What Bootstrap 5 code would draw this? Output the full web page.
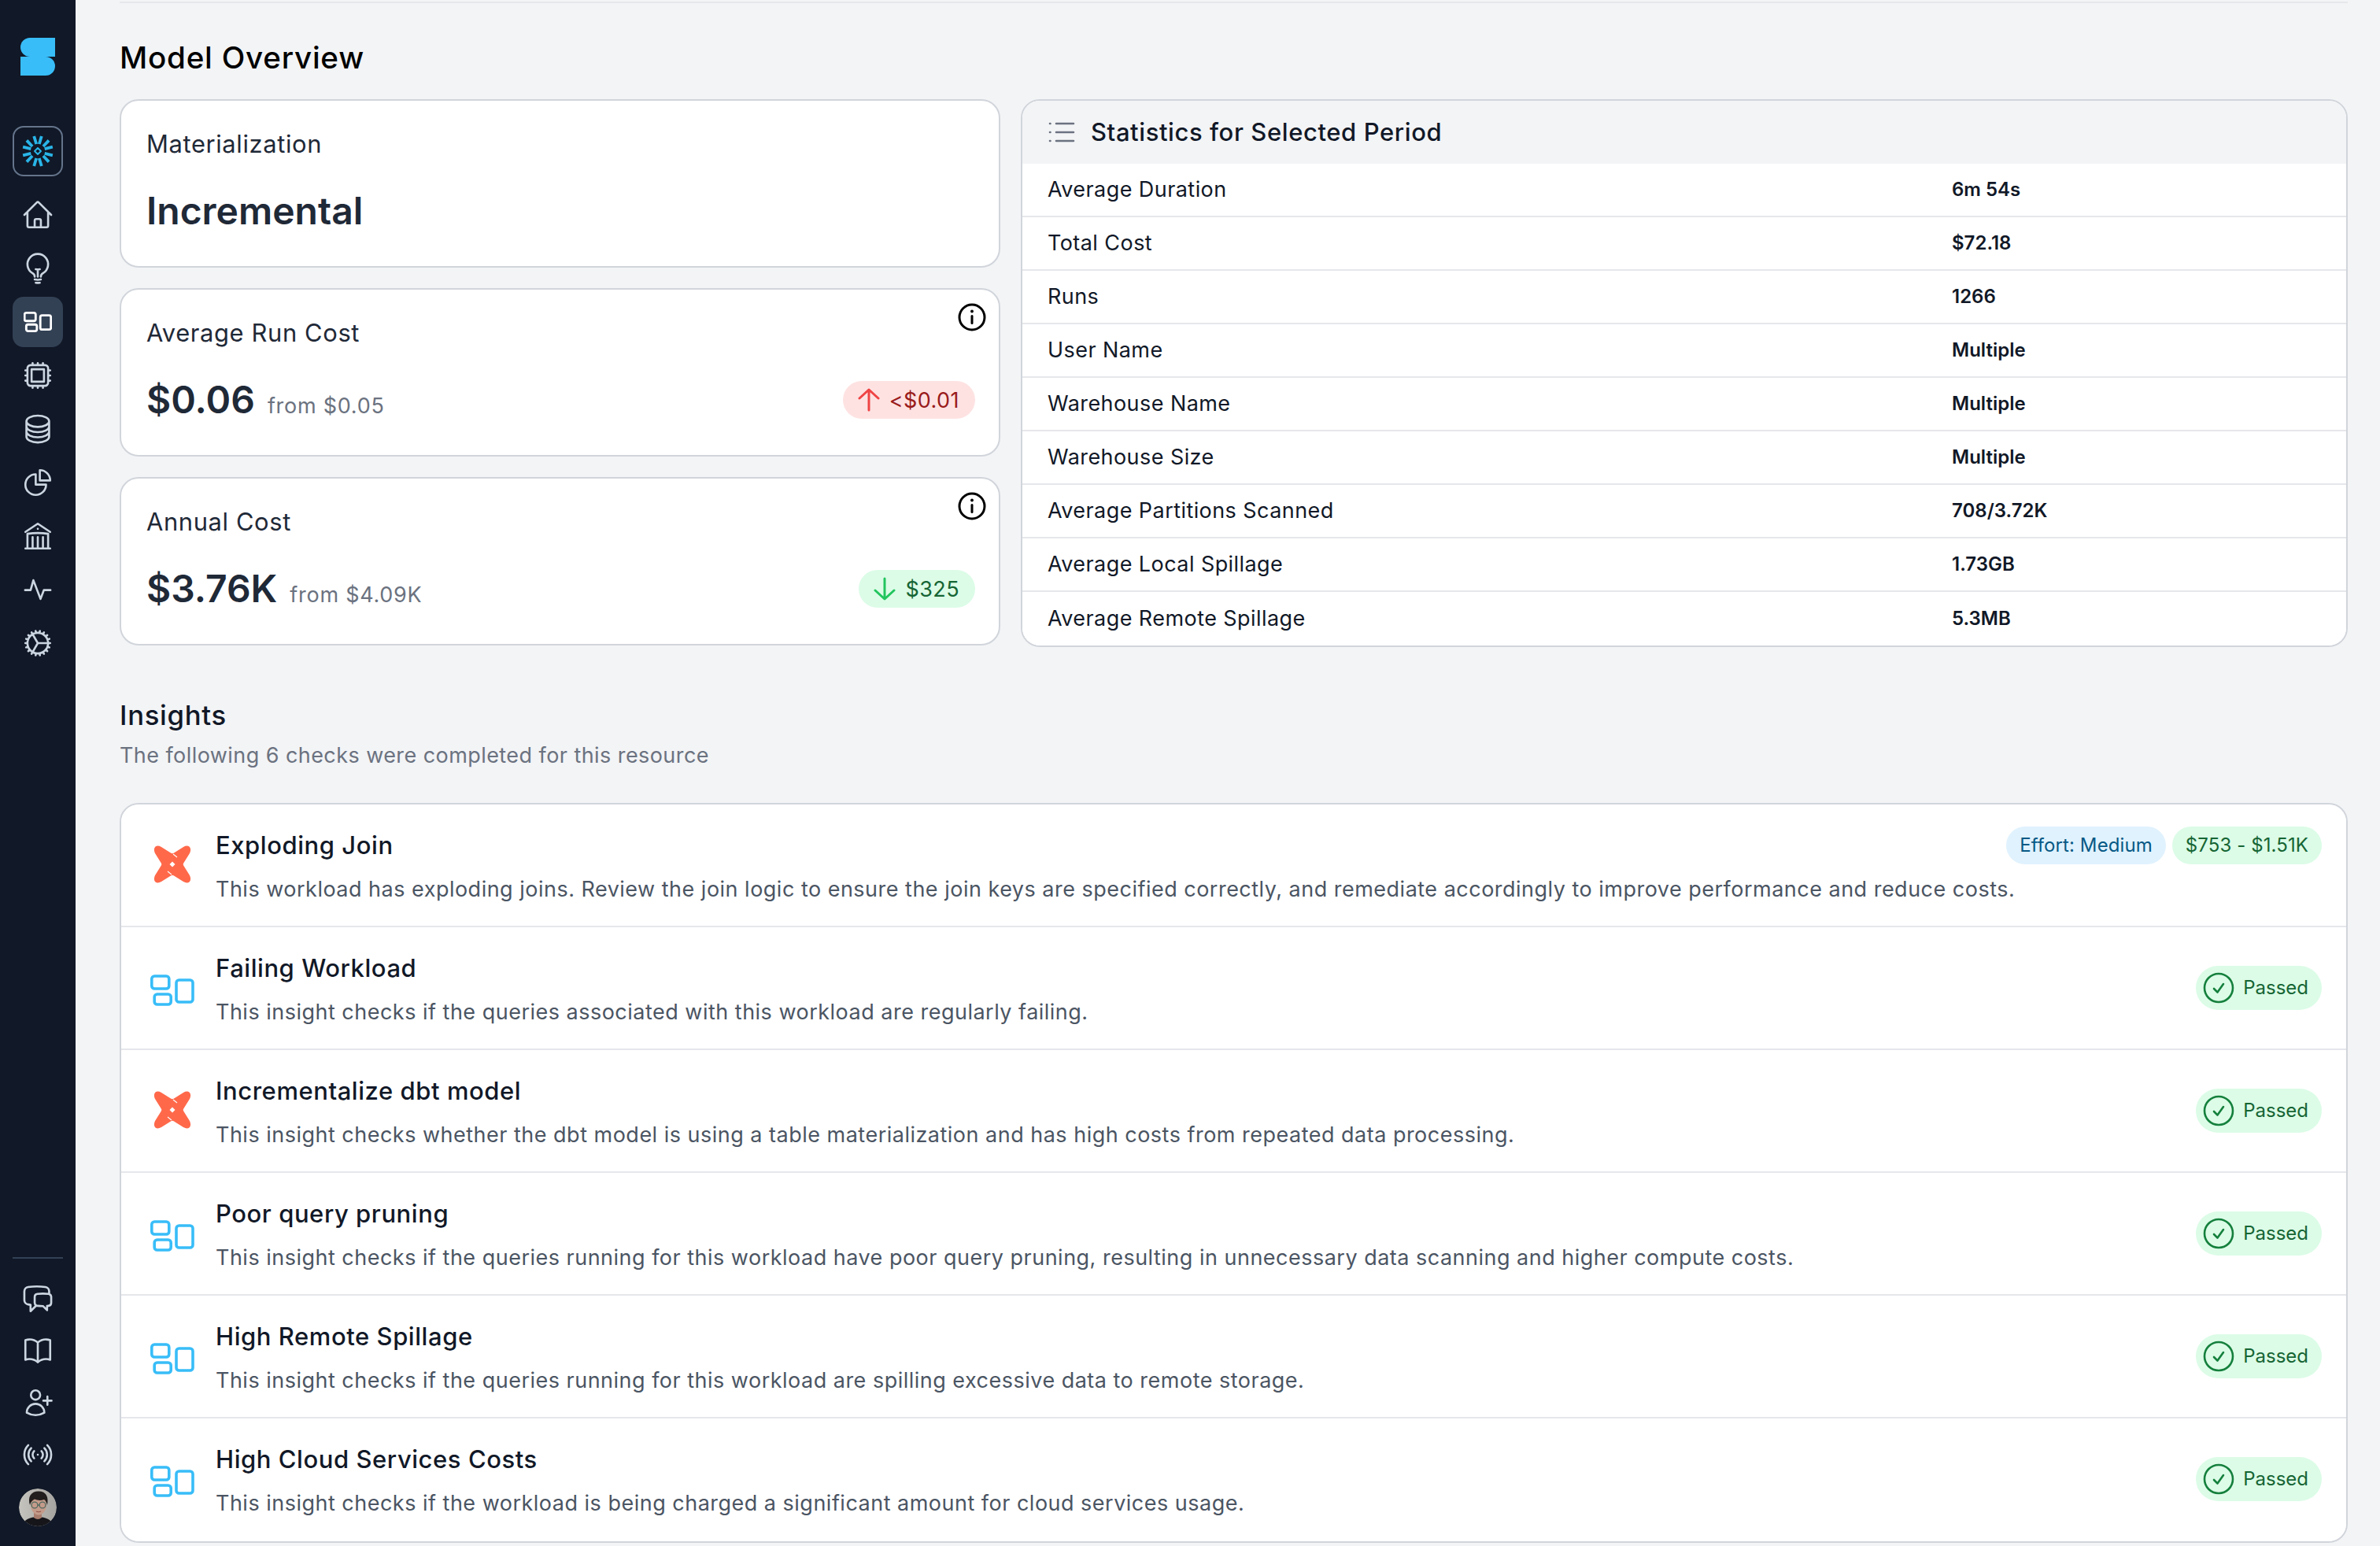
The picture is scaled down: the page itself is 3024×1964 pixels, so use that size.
<!DOCTYPE html>
<html lang="en">
<head>
<meta charset="utf-8">
<title>Model Overview</title>
<link href="https://cdn.jsdelivr.net/npm/bootstrap@5.3.0/dist/css/bootstrap.min.css" rel="stylesheet">
<style>
html,body{height:100%;overflow:hidden}
body{background:#f3f4f6;font-family:Inter,"Liberation Sans",sans-serif;color:#111827;letter-spacing:.027em}
.side-rail{width:96px;height:1964px;background:#111827;padding:48px 16px 25px}
.side-logo{width:44px;height:48px;margin:0 auto 64px;display:block}
.side-btn{width:64px;height:64px;border-radius:14px;color:#cbd5e1}
.side-btn svg{width:42px;height:42px}
.side-snow{border:2px solid #64748b;margin-bottom:17px}
.side-on{background:#334155;color:#fff}
.side-on svg{width:36px;height:36px}
.side-stack{gap:4px}
.side-tools{gap:2px}
.side-rule{height:2px;background:#334155;margin-bottom:19px}
.side-ava{width:48px;height:48px;border-radius:50%;margin:11px auto 0;display:block}
.main-pane{padding:2px 41px 0 56px;min-width:0}
.top-rule{height:2px;background:#e5e7eb}
.sec-title{font-size:38.6px;font-weight:500;line-height:50px;color:#000;margin:44px 0 28px;letter-spacing:.02em}
.sec-title.is-second{margin:61px 0 7px;color:#111827;font-size:34.7px;letter-spacing:.02em}
.sec-sub{font-size:27px;line-height:40px;color:#6b7280;margin-bottom:40px}
.ov-wrap{gap:26px}
.ov-left{width:1119px;gap:26px}
.ov-right{min-width:0}
.pane-card{--bs-card-border-color:#d1d5db;--bs-card-border-width:2px;--bs-card-border-radius:24px;--bs-card-inner-border-radius:22px;overflow:hidden}
.kpi-card{height:214px;padding:32px 30px 0 32px}
.kpi-label{font-size:30.9px;line-height:46px;color:#1f2937;letter-spacing:.02em}
.kpi-row{margin-top:27px;height:70px}
.kpi-num{font-size:48px;font-weight:600;line-height:70px;color:#1f2937;letter-spacing:0}
.kpi-from{font-size:27px;color:#6b7280;margin-left:16px;letter-spacing:.027em}
.kpi-info{position:absolute;right:16px;top:17px;width:36px;height:36px;color:#000}
.tag-pill{display:inline-flex;align-items:center;height:48px;border-radius:24px;padding:0 20px 0 19px;font-size:27px;line-height:1;white-space:nowrap;flex-shrink:0}
.tag-pill svg{width:28px;height:30px;margin-right:12px}
.tag-red{background:#fee2e2;color:#991b1b}
.tag-green{background:#dcfce7;color:#166534}
.tag-small{font-size:24px;padding:0 17px;letter-spacing:.004em}
.tag-blue{background:#e0f2fe;color:#075985}
.tag-pass{height:56px;border-radius:28px;padding:0 17px 0 9px;font-size:24px;letter-spacing:0}
.tag-pass svg{width:40px;height:40px;margin-right:11px}
.stat-head{height:80px;background:#f3f4f6;padding:0 33px;font-size:31px;font-weight:500;color:#111827;letter-spacing:.019em}
.stat-head svg{width:34px;height:28px;margin:0 20px 0 0;color:#6b7280}
.stat-list{--bs-list-group-border-color:#e5e7eb;--bs-list-group-border-width:2px;--bs-list-group-item-padding-x:32px;--bs-list-group-item-padding-y:0;background:#fff;border-top:0!important;border-bottom:0!important}
.stat-row{height:68px;font-size:27px;color:#111827}
.stat-name{width:1149px}
.stat-val{font-size:24px;font-weight:600;color:#111827;letter-spacing:0}
.ins-list{--bs-list-group-border-color:#e5e7eb;--bs-list-group-border-width:2px;--bs-list-group-item-padding-x:33px;--bs-list-group-item-padding-y:0;border-top:0!important;border-bottom:0!important}
.ins-row{height:156px;padding-top:29px!important}
.ins-ico{width:56px;height:48px;margin-top:23px;margin-left:4px}
.ins-ico-blue{width:56px;height:40px;margin:31px 0 0 4px;color:#38bdf8}
.ins-body{margin-left:27px;min-width:0}
.ins-name{font-size:31px;font-weight:500;line-height:46px;color:#111827;letter-spacing:.018em}
.ins-desc{font-size:27px;line-height:46px;color:#4b5563;margin-top:10px;white-space:nowrap;letter-spacing:.0181em}
.ins-tags{gap:8px;margin:-1px -2px 0 auto}
.ins-pass{margin:20px -2px 0 auto}
</style>
</head>
<body class="d-flex m-0">
<svg width="0" height="0" class="position-absolute">
<defs>
<g id="ic-stack"><rect x="1.8" y="2" width="22" height="16" rx="3.5"/><rect x="5.2" y="25" width="21" height="13" rx="3.5"/><rect x="33" y="7" width="21" height="28" rx="3.5"/></g>
<g id="ic-dbt"><path fill="#ff694a" d="M2.500 1.500Q5.500-.5 10 2L22 9.500Q24 11 26 9.500L38 2Q42.500-.5 45.500 1.500 48.500 4.500 46 10L38.500 22Q37 24 38.500 26L46 38Q48.500 43.500 45.500 46.500 42.500 48.500 38 46L26 38.500Q24 37 22 38.500L10 46Q5.500 48.500 2.500 46.500-.5 43.500 2 38L9.500 26Q11 24 9.500 22L2 10Q-.5 4.500 2.500 1.500Z"/><path d="M24 20.500 27.500 24 24 27.500 20.500 24Z" fill="#fff"/><path d="M25 11 30 15M23 37 18 33" stroke="#fff" stroke-width="1.100" fill="none"/></g>
</defs>
</svg>

<aside class="side-rail d-flex flex-column flex-shrink-0">
  <svg class="side-logo" viewBox="0 0 44 48"><path fill="#38bdf8" d="M12 0H44V24H12A12 12 0 0 1 12 0Z"/><path fill="#38bdf8" d="M0 24H32A12 12 0 0 1 32 48H0Z"/></svg>
  <div class="side-btn side-snow d-flex align-items-center justify-content-center">
    <svg viewBox="-21 -21 42 42" fill="none" stroke="#29b5e8" stroke-width="3.800" stroke-linejoin="round">
      <g id="sn-arm"><path d="M-4.800-19-1.800-9M4.800-19 1.800-9"/></g>
      <use href="#sn-arm" transform="rotate(60)"/><use href="#sn-arm" transform="rotate(120)"/><use href="#sn-arm" transform="rotate(180)"/><use href="#sn-arm" transform="rotate(240)"/><use href="#sn-arm" transform="rotate(300)"/>
      <path d="M-4 0 0-4 4 0 0 4Z" stroke-width="1.900"/>
    </svg>
  </div>
  <nav class="side-stack d-flex flex-column">
    <a class="side-btn d-flex align-items-center justify-content-center"><svg viewBox="0 0 24 24" fill="none" stroke="currentColor" stroke-width="1.500" stroke-linecap="round" stroke-linejoin="round"><path d="M2.25 12l8.954-8.955c.44-.439 1.152-.439 1.591 0L21.75 12M4.5 9.75v10.125c0 .621.504 1.125 1.125 1.125H9.75v-4.875c0-.621.504-1.125 1.125-1.125h2.25c.621 0 1.125.504 1.125 1.125V21h4.125c.621 0 1.125-.504 1.125-1.125V9.75M8.25 21h8.25"/></svg></a>
    <a class="side-btn d-flex align-items-center justify-content-center"><svg viewBox="0 0 24 24" fill="none" stroke="currentColor" stroke-width="1.500" stroke-linecap="round" stroke-linejoin="round"><path d="M12 18v-5.250m0 0a6.010 6.010 0 001.500-.189m-1.500.189a6.010 6.010 0 01-1.500-.189m3.750 7.478a12.060 12.060 0 01-4.500 0m3.750 2.383a14.406 14.406 0 01-3 0M14.250 18v-.192c0-.983.658-1.823 1.508-2.316a7.500 7.500 0 10-7.517 0c.85.493 1.509 1.333 1.509 2.316V18"/></svg></a>
    <a class="side-btn side-on d-flex align-items-center justify-content-center"><svg viewBox="0 0 56 40" fill="none" stroke="currentColor" stroke-width="4.400"><use href="#ic-stack"/></svg></a>
    <a class="side-btn d-flex align-items-center justify-content-center"><svg viewBox="0 0 24 24" fill="none" stroke="currentColor" stroke-width="1.500" stroke-linecap="round" stroke-linejoin="round"><path d="M8.250 3v1.500M4.500 8.250H3m18 0h-1.500M4.500 12H3m18 0h-1.500m-15 3.750H3m18 0h-1.500M8.250 19.500V21M12 3v1.500m0 15V21m3.750-18v1.500m0 15V21m-9-1.500h10.500a2.250 2.250 0 002.250-2.250V6.750a2.250 2.250 0 00-2.250-2.250H6.750A2.250 2.250 0 004.500 6.750v10.500a2.250 2.250 0 002.250 2.250zm.75-12h9v9h-9v-9z"/></svg></a>
    <a class="side-btn d-flex align-items-center justify-content-center"><svg viewBox="0 0 24 24" fill="none" stroke="currentColor" stroke-width="1.500" stroke-linecap="round" stroke-linejoin="round"><path d="M20.250 6.375c0 2.278-3.694 4.125-8.250 4.125S3.750 8.653 3.750 6.375m16.500 0c0-2.278-3.694-4.125-8.250-4.125S3.750 4.097 3.750 6.375m16.500 0v11.250c0 2.278-3.694 4.125-8.250 4.125s-8.250-1.847-8.250-4.125V6.375m16.500 0v3.750m-16.500-3.750v3.750m16.500 0v3.750C20.250 16.153 16.556 18 12 18s-8.250-1.847-8.250-4.125v-3.750m16.500 0c0 2.278-3.694 4.125-8.250 4.125s-8.250-1.847-8.250-4.125"/></svg></a>
    <a class="side-btn d-flex align-items-center justify-content-center"><svg viewBox="0 0 24 24" fill="none" stroke="currentColor" stroke-width="1.500" stroke-linecap="round" stroke-linejoin="round"><path d="M10.500 6a7.500 7.500 0 107.500 7.500h-7.500V6z"/><path d="M13.500 10.500H21A7.500 7.500 0 0013.500 3v7.500z"/></svg></a>
    <a class="side-btn d-flex align-items-center justify-content-center"><svg viewBox="0 0 24 24" fill="none" stroke="currentColor" stroke-width="1.500" stroke-linecap="round" stroke-linejoin="round"><path d="M12 21v-8.250M15.750 21v-8.250M8.250 21v-8.250M3 9l9-6 9 6m-1.500 12V10.332A48.360 48.360 0 0012 9.750c-2.551 0-5.056.2-7.500.582V21M3 21h18M12 6.750h.008v.008H12V6.750z"/></svg></a>
    <a class="side-btn d-flex align-items-center justify-content-center"><svg viewBox="-3 -3 30 30" fill="none" stroke="currentColor" stroke-width="1.900" stroke-linecap="round" stroke-linejoin="round"><path d="M.5 12.500h5L8 3.500l6.500 17 3-8h6"/></svg></a>
    <a class="side-btn d-flex align-items-center justify-content-center"><svg viewBox="0 0 24 24" fill="none" stroke="currentColor" stroke-width="1.500" stroke-linecap="round" stroke-linejoin="round"><path d="M4.500 12a7.500 7.500 0 0015 0m-15 0a7.500 7.500 0 1115 0m-15 0H3m16.500 0H21m-1.500 0H12m-8.457 3.077l1.410-.513m14.095-5.130l1.410-.513M5.106 17.785l1.150-.964m11.490-9.642l1.149-.964M7.501 19.795l.75-1.300m7.500-12.990l.75-1.300m-6.063 16.658l.26-1.477m2.605-14.772l.26-1.477m0 17.726l-.26-1.477M10.698 4.614l-.26-1.477M16.500 19.794l-.75-1.299M7.500 4.205L12 12m6.894 5.785l-1.149-.964M6.256 7.178l-1.150-.964m15.352 8.864l-1.410-.513M4.954 9.435l-1.410-.514M12.002 12l-3.750 6.495"/></svg></a>
  </nav>
  <div class="mt-auto">
    <div class="side-rule"></div>
    <div class="side-tools d-flex flex-column align-items-center">
      <a class="side-btn d-flex align-items-center justify-content-center"><svg viewBox="0 0 24 24" fill="none" stroke="currentColor" stroke-width="1.500" stroke-linecap="round" stroke-linejoin="round"><path d="M20.250 8.511c.884.284 1.500 1.128 1.500 2.097v4.286c0 1.136-.847 2.100-1.980 2.193-.34.027-.68.052-1.020.072v3.091l-3-3c-1.354 0-2.694-.055-4.020-.163a2.115 2.115 0 01-.825-.242m9.345-8.334a2.126 2.126 0 00-.476-.095 48.640 48.640 0 00-8.048 0c-1.131.094-1.976 1.057-1.976 2.192v4.286c0 .837.46 1.580 1.155 1.951m9.345-8.334V6.637c0-1.621-1.152-3.026-2.760-3.235A48.455 48.455 0 0011.250 3c-2.115 0-4.198.137-6.240.402-1.608.209-2.760 1.614-2.760 3.235v6.226c0 1.621 1.152 3.026 2.760 3.235.577.075 1.157.14 1.740.194V21l4.155-4.155"/></svg></a>
      <a class="side-btn d-flex align-items-center justify-content-center"><svg viewBox="0 0 24 24" fill="none" stroke="currentColor" stroke-width="1.500" stroke-linecap="round" stroke-linejoin="round"><path d="M12 6.042A8.967 8.967 0 006 3.750c-1.052 0-2.062.18-3 .512v14.250A8.987 8.987 0 016 18c2.305 0 4.408.867 6 2.292m0-14.250a8.966 8.966 0 016-2.292c1.052 0 2.062.18 3 .512v14.250A8.987 8.987 0 0018 18a8.967 8.967 0 00-6 2.292m0-14.250v14.250"/></svg></a>
      <a class="side-btn d-flex align-items-center justify-content-center"><svg viewBox="0 0 24 24" fill="none" stroke="currentColor" stroke-width="1.500" stroke-linecap="round" stroke-linejoin="round"><path d="M19 7.500v3m0 0v3m0-3h3m-3 0h-3m-2.250-4.125a3.375 3.375 0 11-6.750 0 3.375 3.375 0 016.750 0zM4 19.235v-.11a6.375 6.375 0 0112.750 0v.109A12.318 12.318 0 0110.374 21c-2.331 0-4.512-.645-6.374-1.766z"/></svg></a>
      <a class="side-btn d-flex align-items-center justify-content-center"><svg viewBox="0 0 24 24" fill="none" stroke="currentColor" stroke-width="1.500" stroke-linecap="round" stroke-linejoin="round"><path d="M9.348 14.651a3.750 3.750 0 010-5.303m5.304 0a3.750 3.750 0 010 5.303m-7.425 2.122a6.750 6.750 0 010-9.546m9.546 0a6.750 6.750 0 010 9.546M5.106 18.894c-3.808-3.808-3.808-9.980 0-13.789m13.788 0c3.808 3.808 3.808 9.981 0 13.790M12 12h.008v.007H12V12z"/></svg></a>
    </div>
    <svg class="side-ava" viewBox="0 0 48 48">
      <defs><clipPath id="ava-c"><circle cx="24" cy="24" r="24"/></clipPath><linearGradient id="ava-bg" x1="0" x2="1"><stop offset="0" stop-color="#c4c3bd"/><stop offset="1" stop-color="#a6a4a0"/></linearGradient></defs>
      <g clip-path="url(#ava-c)">
        <rect width="48" height="48" fill="url(#ava-bg)"/>
        <path d="M4 48c1-8 10-12 20-12s19 4 20 12z" fill="#15151a"/>
        <path d="M19 27h10v10q-5 4-10 0z" fill="#a87c6c"/>
        <ellipse cx="25" cy="21" rx="10" ry="12.500" fill="#c49b8a"/>
        <path d="M14 21C11 11 15 3.500 25 3.500S38 11 36 21c-1-3-2-6-4-7-4 1.500-9 1-12-.5-3 1.500-5 4-6 7.500z" fill="#221e1d"/>
        <g fill="none" stroke="#4f6a5f" stroke-width="1.300"><circle cx="20" cy="21" r="3.900"/><circle cx="30" cy="21" r="3.900"/><path d="M23.900 21h2.200"/></g>
        <path d="M22 29c2 1 4 1 6 0" stroke="#8f5248" stroke-width="1.200" fill="none"/>
      </g>
    </svg>
  </div>
</aside>

<main class="main-pane flex-grow-1">
  <div class="top-rule"></div>
  <h2 class="sec-title">Model Overview</h2>
  <div class="d-flex ov-wrap">
    <div class="ov-left d-flex flex-column flex-shrink-0">
      <div class="card pane-card kpi-card">
        <div class="kpi-label">Materialization</div>
        <div class="kpi-row d-flex align-items-center"><span class="kpi-num">Incremental</span></div>
      </div>
      <div class="card pane-card kpi-card position-relative">
        <svg class="kpi-info" viewBox="0 0 36 36" fill="none" stroke="currentColor" stroke-width="3"><circle cx="18" cy="18" r="16"/><path d="M18 16.500v9" stroke-linecap="round"/><circle cx="18" cy="10.500" r="1.900" fill="currentColor" stroke="none"/></svg>
        <div class="kpi-label">Average Run Cost</div>
        <div class="kpi-row d-flex align-items-center justify-content-between">
          <div class="d-flex align-items-baseline"><span class="kpi-num">$0.06</span><span class="kpi-from">from $0.05</span></div>
          <span class="tag-pill tag-red"><svg viewBox="0 0 28 30" fill="none" stroke="#ef4444" stroke-width="3" stroke-linecap="round" stroke-linejoin="round"><path d="M14 28V3M2 13 14 2l12 11"/></svg>&lt;$0.01</span>
        </div>
      </div>
      <div class="card pane-card kpi-card position-relative">
        <svg class="kpi-info" viewBox="0 0 36 36" fill="none" stroke="currentColor" stroke-width="3"><circle cx="18" cy="18" r="16"/><path d="M18 16.500v9" stroke-linecap="round"/><circle cx="18" cy="10.500" r="1.900" fill="currentColor" stroke="none"/></svg>
        <div class="kpi-label">Annual Cost</div>
        <div class="kpi-row d-flex align-items-center justify-content-between">
          <div class="d-flex align-items-baseline"><span class="kpi-num">$3.76K</span><span class="kpi-from">from $4.09K</span></div>
          <span class="tag-pill tag-green"><svg viewBox="0 0 28 30" fill="none" stroke="#22c55e" stroke-width="3" stroke-linecap="round" stroke-linejoin="round"><path d="M14 2v25M2 17l12 11 12-11"/></svg>$325</span>
        </div>
      </div>
    </div>
    <div class="ov-right flex-grow-1">
      <div class="card pane-card h-100">
        <div class="stat-head d-flex align-items-center">
          <svg viewBox="0 0 34 28" fill="none" stroke="currentColor" stroke-width="2.600" stroke-linecap="round"><path d="M10 3h22M10 14h22M10 25h22M2 3h.5M2 14h.5M2 25h.5"/></svg>
          <span>Statistics for Selected Period</span>
        </div>
        <div class="list-group list-group-flush stat-list">
          <div class="list-group-item stat-row d-flex align-items-center"><span class="stat-name">Average Duration</span><span class="stat-val">6m 54s</span></div>
          <div class="list-group-item stat-row d-flex align-items-center"><span class="stat-name">Total Cost</span><span class="stat-val">$72.18</span></div>
          <div class="list-group-item stat-row d-flex align-items-center"><span class="stat-name">Runs</span><span class="stat-val">1266</span></div>
          <div class="list-group-item stat-row d-flex align-items-center"><span class="stat-name">User Name</span><span class="stat-val">Multiple</span></div>
          <div class="list-group-item stat-row d-flex align-items-center"><span class="stat-name">Warehouse Name</span><span class="stat-val">Multiple</span></div>
          <div class="list-group-item stat-row d-flex align-items-center"><span class="stat-name">Warehouse Size</span><span class="stat-val">Multiple</span></div>
          <div class="list-group-item stat-row d-flex align-items-center"><span class="stat-name">Average Partitions Scanned</span><span class="stat-val">708/3.72K</span></div>
          <div class="list-group-item stat-row d-flex align-items-center"><span class="stat-name">Average Local Spillage</span><span class="stat-val">1.73GB</span></div>
          <div class="list-group-item stat-row d-flex align-items-center"><span class="stat-name">Average Remote Spillage</span><span class="stat-val">5.3MB</span></div>
        </div>
      </div>
    </div>
  </div>

  <h2 class="sec-title is-second">Insights</h2>
  <p class="sec-sub">The following 6 checks were completed for this resource</p>

  <div class="card pane-card">
    <div class="list-group list-group-flush ins-list">
      <div class="list-group-item ins-row d-flex">
        <svg class="ins-ico flex-shrink-0" viewBox="-4 0 56 48"><use href="#ic-dbt"/></svg>
        <div class="ins-body"><div class="ins-name">Exploding Join</div><div class="ins-desc">This workload has exploding joins. Review the join logic to ensure the join keys are specified correctly, and remediate accordingly to improve performance and reduce costs.</div></div>
        <div class="ins-tags d-flex align-items-start"><span class="tag-pill tag-small tag-blue">Effort: Medium</span><span class="tag-pill tag-small tag-green">$753 - $1.51K</span></div>
      </div>
      <div class="list-group-item ins-row d-flex">
        <svg class="ins-ico-blue flex-shrink-0" viewBox="0 0 56 40" fill="none" stroke="currentColor" stroke-width="3.600"><use href="#ic-stack"/></svg>
        <div class="ins-body"><div class="ins-name">Failing Workload</div><div class="ins-desc">This insight checks if the queries associated with this workload are regularly failing.</div></div>
        <div class="ins-pass"><span class="tag-pill tag-green tag-pass"><svg viewBox="0 0 40 40" fill="none" stroke="#15803d" stroke-width="2.600" stroke-linecap="round" stroke-linejoin="round"><circle cx="20" cy="20" r="18"/><path d="M14 21l4.500 4.500L26 15"/></svg>Passed</span></div>
      </div>
      <div class="list-group-item ins-row d-flex">
        <svg class="ins-ico flex-shrink-0" viewBox="-4 0 56 48"><use href="#ic-dbt"/></svg>
        <div class="ins-body"><div class="ins-name">Incrementalize dbt model</div><div class="ins-desc">This insight checks whether the dbt model is using a table materialization and has high costs from repeated data processing.</div></div>
        <div class="ins-pass"><span class="tag-pill tag-green tag-pass"><svg viewBox="0 0 40 40" fill="none" stroke="#15803d" stroke-width="2.600" stroke-linecap="round" stroke-linejoin="round"><circle cx="20" cy="20" r="18"/><path d="M14 21l4.500 4.500L26 15"/></svg>Passed</span></div>
      </div>
      <div class="list-group-item ins-row d-flex">
        <svg class="ins-ico-blue flex-shrink-0" viewBox="0 0 56 40" fill="none" stroke="currentColor" stroke-width="3.600"><use href="#ic-stack"/></svg>
        <div class="ins-body"><div class="ins-name">Poor query pruning</div><div class="ins-desc">This insight checks if the queries running for this workload have poor query pruning, resulting in unnecessary data scanning and higher compute costs.</div></div>
        <div class="ins-pass"><span class="tag-pill tag-green tag-pass"><svg viewBox="0 0 40 40" fill="none" stroke="#15803d" stroke-width="2.600" stroke-linecap="round" stroke-linejoin="round"><circle cx="20" cy="20" r="18"/><path d="M14 21l4.500 4.500L26 15"/></svg>Passed</span></div>
      </div>
      <div class="list-group-item ins-row d-flex">
        <svg class="ins-ico-blue flex-shrink-0" viewBox="0 0 56 40" fill="none" stroke="currentColor" stroke-width="3.600"><use href="#ic-stack"/></svg>
        <div class="ins-body"><div class="ins-name">High Remote Spillage</div><div class="ins-desc">This insight checks if the queries running for this workload are spilling excessive data to remote storage.</div></div>
        <div class="ins-pass"><span class="tag-pill tag-green tag-pass"><svg viewBox="0 0 40 40" fill="none" stroke="#15803d" stroke-width="2.600" stroke-linecap="round" stroke-linejoin="round"><circle cx="20" cy="20" r="18"/><path d="M14 21l4.500 4.500L26 15"/></svg>Passed</span></div>
      </div>
      <div class="list-group-item ins-row d-flex">
        <svg class="ins-ico-blue flex-shrink-0" viewBox="0 0 56 40" fill="none" stroke="currentColor" stroke-width="3.600"><use href="#ic-stack"/></svg>
        <div class="ins-body"><div class="ins-name">High Cloud Services Costs</div><div class="ins-desc">This insight checks if the workload is being charged a significant amount for cloud services usage.</div></div>
        <div class="ins-pass"><span class="tag-pill tag-green tag-pass"><svg viewBox="0 0 40 40" fill="none" stroke="#15803d" stroke-width="2.600" stroke-linecap="round" stroke-linejoin="round"><circle cx="20" cy="20" r="18"/><path d="M14 21l4.500 4.500L26 15"/></svg>Passed</span></div>
      </div>
    </div>
  </div>
</main>
<script src="https://cdn.jsdelivr.net/npm/bootstrap@5.3.0/dist/js/bootstrap.bundle.min.js"></script>
</body>
</html>
